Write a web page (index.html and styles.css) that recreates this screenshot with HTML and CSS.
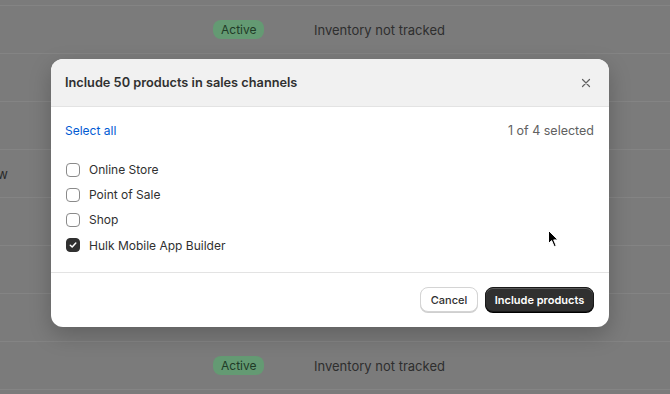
FILE: index.html
```html
<!DOCTYPE html>
<html>
<head>
<meta charset="utf-8">
<link rel="stylesheet" href="styles.css">
</head>
<body>
<div class="page">
  <div class="top-strip"></div>
  <div class="row"><div class="lead"></div><div class="status"><span class="badge">Active</span></div><div class="inv">Inventory not tracked</div></div>
  <div class="row"></div>
  <div class="row"></div>
  <div class="row"><div class="lead"><span>Review</span></div></div>
  <div class="row"></div>
  <div class="row"></div>
  <div class="row"></div>
  <div class="row"><div class="lead"></div><div class="status"><span class="badge">Active</span></div><div class="inv">Inventory not tracked</div></div>
  <div class="row"></div>
</div>

<div class="modal">
  <div class="modal-header">
    <h2 class="modal-title">Include 50 products in sales channels</h2>
    <button class="close" aria-label="Close">
      <svg width="10" height="10" viewBox="0 0 10 10"><path d="M1.5 1.5 L8.5 8.5 M8.5 1.5 L1.5 8.5" stroke="#616161" stroke-width="1.2" stroke-linecap="round"/></svg>
    </button>
  </div>
  <div class="modal-body">
    <div class="select-row">
      <a class="select-all">Select all</a>
      <span class="count">1 of 4 selected</span>
    </div>
    <ul class="channels">
      <li><span class="cb"></span>Online Store</li>
      <li><span class="cb"></span>Point of Sale</li>
      <li><span class="cb"></span>Shop</li>
      <li><span class="cb checked"><svg width="10" height="10" viewBox="0 0 10 10"><path d="M2.3 5.2 L4.2 7 L7.8 3" fill="none" stroke="#fff" stroke-width="1.5" stroke-linecap="round" stroke-linejoin="round"/></svg></span>Hulk Mobile App Builder</li>
    </ul>
  </div>
  <div class="modal-footer">
    <button class="btn btn-secondary">Cancel</button>
    <button class="btn btn-primary">Include products</button>
  </div>
</div>

<svg class="cursor" width="12" height="19" viewBox="0 0 12 19"><path d="M0.5 0.5 L0.5 13.5 L3.6 10.6 L6.2 16.6 L8.2 15.7 L5.7 9.9 L10 9.9 Z" fill="#000" stroke="#fff" stroke-width="1"/></svg>
</body>
</html>
```
FILE: styles.css
```css
* { box-sizing: border-box; }
html, body { margin: 0; padding: 0; }
body {
  width: 670px;
  height: 394px;
  overflow: hidden;
  background: #7b7b7b;
  font-family: Inter, "Noto Sans", "Liberation Sans", sans-serif;
  position: relative;
}
.page { display: flex; flex-direction: column; height: 394px; overflow: hidden; }
.top-strip { height: 5px; flex: none; }
.row {
  height: 48px;
  flex: none;
  border-top: 1px solid #848484;
  display: flex;
  align-items: center;
  color: #2e2e2e;
  font-size: 13px;
}
.lead {
  width: 8px;
  display: flex;
  justify-content: flex-end;
  white-space: nowrap;
  color: #2a2a2a;
}
.status { margin-left: 205px; width: 101px; }
.badge {
  display: inline-block;
  background: #649a73;
  color: #1f3b27;
  font-size: 12px;
  padding: 2px 8px;
  border-radius: 8px;
}
.inv { color: #2e2e2e; }

.modal {
  position: absolute;
  left: 51px;
  top: 59px;
  width: 558px;
  height: 268px;
  background: #fff;
  border-radius: 12px;
  overflow: hidden;
  box-shadow: 0 8px 22px rgba(0,0,0,0.22);
  display: flex;
  flex-direction: column;
}
.modal-header {
  height: 48px;
  background: #f1f1f1;
  border-bottom: 1px solid #e3e3e3;
  display: flex;
  align-items: center;
  justify-content: space-between;
  padding: 0 14px 0 14px;
}
.modal-title {
  margin: 0;
  font-size: 12.75px;
  font-weight: 600;
  color: #303030;
}
.close {
  border: 0;
  background: transparent;
  padding: 0;
  width: 20px;
  height: 20px;
  display: flex;
  align-items: center;
  justify-content: center;
  margin-right: -1px;
}
.modal-body {
  flex: 1;
  padding: 13px 15px 0 14px;
}
.select-row {
  display: flex;
  justify-content: space-between;
  align-items: center;
  height: 20px;
  font-size: 12px;
}
.select-all { color: #005bd3; }
.count { color: #616161; font-size: 12.5px; }
.channels {
  list-style: none;
  margin: 17px 0 0 0;
  padding: 0;
}
.channels li {
  height: 25px;
  display: flex;
  align-items: center;
  font-size: 12px;
  color: #303030;
}
.channels li:last-child { height: 26px; }
.cb {
  width: 14px;
  height: 14px;
  border: 1px solid #8a8a8a;
  border-radius: 4px;
  margin: 0 9px 0 1px;
  display: flex;
  align-items: center;
  justify-content: center;
}
.cb.checked { background: #303030; border-color: #303030; }
.modal-footer {
  height: 55px;
  border-top: 1px solid #e3e3e3;
  display: flex;
  align-items: center;
  justify-content: flex-end;
  gap: 7px;
  padding: 0 15px 1px 0;
}
.btn {
  height: 25px;
  border-radius: 8px;
  font-family: Inter, "Noto Sans", sans-serif;
  font-size: 11px;
  font-weight: 600;
  padding: 0 4px;
  white-space: nowrap;
}
.btn-secondary {
  background: #fff;
  color: #303030;
  border: 1px solid #d4d4d4;
  box-shadow: 0 1px 0 #cfcfcf;
  width: 58px;
  font-weight: 500;
}
.btn-primary {
  background: #303030;
  color: #fff;
  border: 1px solid #1a1a1a;
  box-shadow: inset 0 1px 0 rgba(255,255,255,0.2), 0 1px 0 #000;
  width: 109px;
}
.cursor {
  position: absolute;
  left: 548px;
  top: 230px;
}
```
